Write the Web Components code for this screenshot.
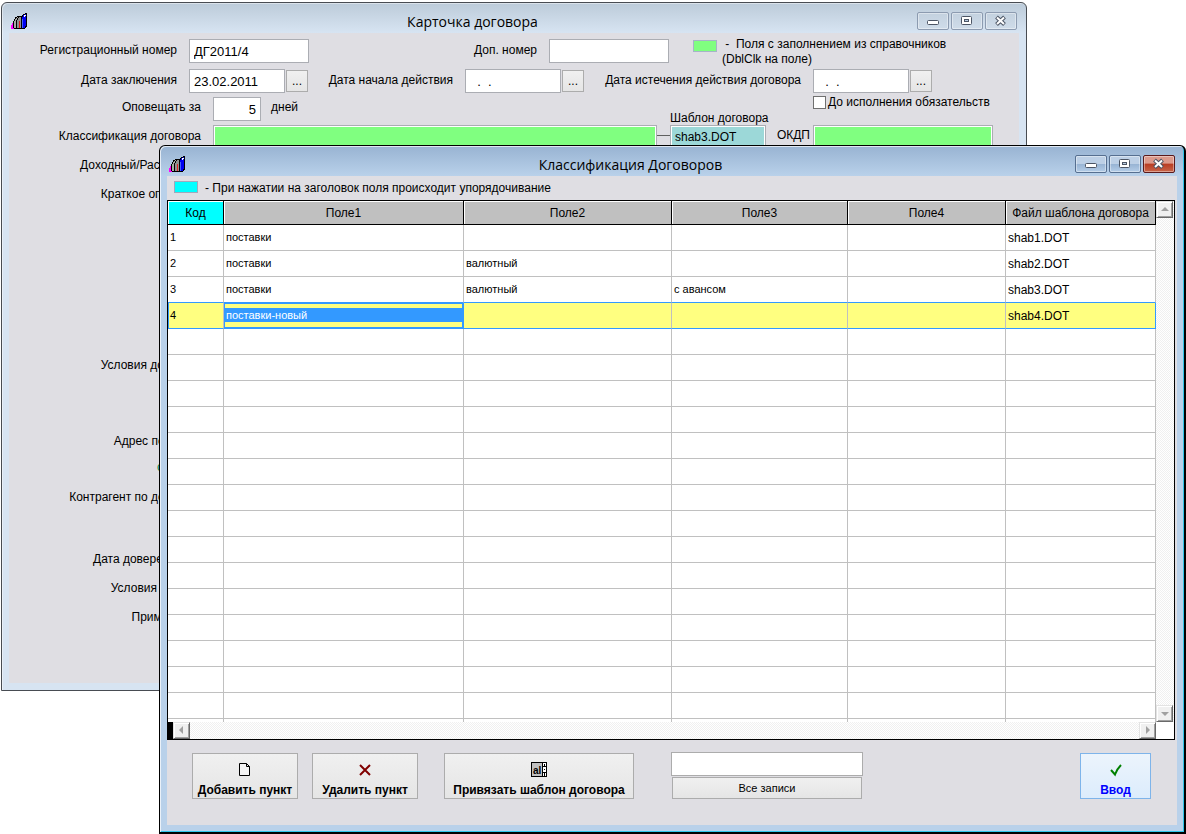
<!DOCTYPE html>
<html lang="ru">
<head>
<meta charset="utf-8">
<title>Карточка договора</title>
<style>
    html, body{
        margin: 0;
        height: 100%;
        background-color: white;
    }

    body{
        position: relative;
        min-height: 700px;
        overflow: hidden;
        font-family: "Liberation Sans", Arial, sans-serif;
        font-size: 12px;
        color: black;
    }

    /* two overlapping windows on the desktop */
    .card{
        position: absolute;
        inset: 2px 159px 143px 1px;
    }

    .classifier{
        position: absolute;
        inset: 145px 0 0 159px;
    }
</style>
</head>
<body>
    <app-window class="card" caption="Карточка договора">
        <contract-form></contract-form>
    </app-window>

    <app-window class="classifier" caption="Классификация Договоров" active>
        <classifier-view></classifier-view>
    </app-window>

<script>
class AppWindow extends HTMLElement{
    constructor(){
        super();
        this.attachShadow({mode: 'open'});
        this.shadowRoot.innerHTML=`
            <style>
                :host{
                    --top: #bccbd9;
                    --frame: #d7e4f2;
                    --edge: #484c52;
                    display: flex;
                    flex-direction: column;
                    box-sizing: border-box;
                    border: 1px solid var(--edge);
                    border-radius: 6px 6px 0 0;
                    padding: 0 7px 7px;
                    background: linear-gradient(var(--top), var(--frame) 30px);
                    box-shadow: inset 1px 1px 0 rgba(255, 255, 255, 0.45);
                }

                :host([active]){
                    --top: #98b3d2;
                    --frame: #b9d1ea;
                    --edge: #000000;
                    border-width: 1px 2px 2px 1px;
                    box-shadow: inset 1px 1px 0 rgba(255, 255, 255, 0.7), inset -1px -1px 0 #2fc4e8;
                }

                header{
                    display: grid;
                    grid-template-columns: auto 1fr auto;
                    height: 30px;
                    flex: none;
                }

                .books{
                    width: 18px;
                    height: 18px;
                    margin: 9px 0 0 1px;
                }

                h1{
                    margin: 0;
                    padding-top: 7px;
                    text-align: center;
                    font: 14px/24px "Open Sans", "Noto Sans", sans-serif;
                }

                nav{
                    display: flex;
                    justify-content: flex-end;
                    gap: 2px;
                    padding: 9px 2px 0 0;
                }

                nav button{
                    box-sizing: border-box;
                    width: 32px;
                    height: 18px;
                    padding: 0;
                    border: 1px solid #8c9bb0;
                    border-radius: 2px;
                    background: linear-gradient(#c3d1df, #cfdce9);
                    box-shadow: inset 0 0 0 1px rgba(255, 255, 255, 0.4);
                    line-height: 0;
                }

                :host([active]) nav button{
                    border-color: #566f90;
                    background: linear-gradient(#bdd0e6 48%, #98b4d4 52%, #b4cde8);
                }

                :host([active]) nav .close{
                    border-color: #5a1a1c;
                    background: linear-gradient(#dc9a8c 45%, #b93c22 50%, #c8654a);
                }

                main{
                    flex: 1;
                    min-height: 0;
                    overflow: hidden;
                    background-color: #dfdee3;
                }
            </style>
            <header>
                <svg class="books" viewBox="0 0 18 18" shape-rendering="crispEdges">
                    <path d="M1 17V14L4 9V17Z" fill="#ff00ff"/>
                    <path d="M3.500 15.500V10.500L5.500 5.500L8.500 4.500V6L6.500 10V16.500H4.500Z" fill="#a8a8a8" stroke="#000"/>
                    <path d="M6.500 16.500V9.500L8.500 4.500H11.500V15L10.500 16.500Z" fill="#909090" stroke="#000"/>
                    <path d="M9 9H10V16H9Z" fill="#e02020"/>
                    <path d="M11.500 16.500V6.500L13 3L16.500 1.500V14L14.500 16.500Z" fill="#0000f0" stroke="#000"/>
                    <path d="M13 4L16 2.500V4L14 5Z" fill="#fff"/>
                    <path d="M12 7H13V16H12Z" fill="#4060ff"/>
                </svg>
                <h1></h1>
                <nav>
                    <button aria-label="Свернуть"><svg width="30" height="16"><rect x="9.500" y="7.500" width="11" height="4" rx="1" fill="#fff" stroke="#4c5564"/></svg></button>
                    <button aria-label="Развернуть"><svg width="30" height="16"><rect x="9.500" y="3.500" width="10" height="8" rx="1" fill="#fff" stroke="#4c5564"/><rect x="12.500" y="6.500" width="4" height="2" fill="#b8cbe0" stroke="#4c5564"/></svg></button>
                    <button class="close" aria-label="Закрыть"><svg width="30" height="16"><path d="M10.500 4L18.500 11.500M18.500 4L10.500 11.500" stroke="#4c5564" stroke-width="4"/><path d="M11 4.500L18 11M18 4.500L11 11" stroke="#fff" stroke-width="2"/></svg></button>
                </nav>
            </header>
            <main><slot></slot></main>
            `;
    }

    connectedCallback(){
        this.shadowRoot.querySelector('h1').textContent = this.getAttribute('caption');
    }
}

customElements.define("app-window", AppWindow);

class ContractForm extends HTMLElement{
    constructor(){
        super();
        this.attachShadow({mode: 'open'});
        this.shadowRoot.innerHTML=`
            <style>
                :host{
                    display: block;
                    padding-top: 6px;
                    line-height: 16px;
                    white-space: nowrap;
                }

                .row{
                    display: flex;
                    height: 24px;
                    margin-bottom: 6px;
                }

                .row > label, .unit{
                    padding-top: 3px;
                }

                .row > label{
                    box-sizing: border-box;
                    flex: none;
                    text-align: right;
                    padding-right: 12px;
                }

                .head{ width: 180px; }
                .wide{ width: 204px; }
                .extra{ width: 240px; }
                .start{ width: 157px; }
                .end{ width: 229px; }

                input:not([type]){
                    box-sizing: border-box;
                    flex: none;
                    width: 120px;
                    height: 24px;
                    padding: 0 4px;
                    border: 1px solid #abadb3;
                    background-color: white;
                    font: 13px "Liberation Sans", Arial, sans-serif;
                    color: black;
                }

                input.date{ width: 96px; }
                input.days{ width: 48px; text-align: right; }

                input.ref{
                    background-color: #80ff80;
                    box-shadow: inset 0 0 0 1px white;
                }

                input.class-ref{ width: 444px; }
                input.okdp{ width: 180px; }

                input.template{
                    width: 96px;
                    background-color: #9cd8d8;
                    box-shadow: inset 0 0 0 1px white;
                    font-size: 12px;
                }

                .pick{
                    box-sizing: border-box;
                    width: 22px;
                    height: 22px;
                    margin: 1px 0 0 1px;
                    padding: 0;
                    border: 1px solid #acacac;
                    background: linear-gradient(#f0f0f0, #e5e5e5);
                    font: 12px "Liberation Sans", Arial, sans-serif;
                    color: black;
                }

                .legend{
                    display: flex;
                    gap: 5px;
                    margin-left: 24px;
                    line-height: 15px;
                }

                .legend i{
                    box-sizing: border-box;
                    width: 24px;
                    height: 12px;
                    margin-top: 1px;
                    border: 1px solid #a6b4c8;
                    background-color: #80ff80;
                }

                .legend p{
                    margin: -2px 0 0;
                    white-space: pre;
                }

                .notify{
                    height: 28px;
                    margin-bottom: 0;
                    margin-top: -2px;
                }

                .row.notify > label, .unit{
                    padding-top: 2px;
                }

                .unit{
                    flex: none;
                    width: 409px;
                    padding-left: 10px;
                    box-sizing: border-box;
                }

                .until{
                    display: flex;
                    flex-direction: column;
                    margin-top: -3px;
                }

                .check{
                    display: flex;
                    align-items: center;
                    gap: 2px;
                    margin-left: 143px;
                }

                .check input{
                    appearance: none;
                    box-sizing: border-box;
                    width: 13px;
                    height: 13px;
                    margin: 0;
                    border: 1px solid #707070;
                    background-color: white;
                }

                .link{
                    width: 13px;
                    height: 1px;
                    margin-top: 10px;
                    background-color: #606060;
                }

                .row > label.okdp-label{
                    width: 47px;
                    padding: 2px 3px 0 0;
                }

                /* captions of the lower fields, one grid row for each */
                .captions{
                    display: grid;
                    grid-template-rows: 29px 171px 76px 26px 30px 62px 29px 29px 29px;
                    width: 192px;
                    margin-top: 8px;
                    text-align: right;
                }

                .captions .note{
                    color: #008040;
                    justify-self: end;
                    width: 44px;
                    text-align: left;
                }
            </style>
            <div class="row">
                <label class="head" for="number">Регистрационный номер</label>
                <input id="number" value="ДГ2011/4">
                <label class="extra" for="extra">Доп. номер</label>
                <input id="extra">
                <div class="legend"><i></i><p> -  Поля с заполнением из справочников
(DblClk на поле)</p></div>
            </div>
            <div class="row">
                <label class="head" for="signed">Дата заключения</label>
                <input class="date" id="signed" value="23.02.2011">
                <button class="pick" aria-label="Выбрать дату заключения">...</button>
                <label class="start" for="start">Дата начала действия</label>
                <input class="date" id="start" value="  .  .">
                <button class="pick" aria-label="Выбрать дату начала">...</button>
                <label class="end" for="end">Дата истечения действия договора</label>
                <input class="date" id="end" value="  .  .">
                <button class="pick" aria-label="Выбрать дату истечения">...</button>
            </div>
            <div class="row notify">
                <label class="wide" for="days">Оповещать за</label>
                <input class="days" id="days" value="5">
                <span class="unit">дней</span>
                <div class="until">
                    <label class="check"><input type="checkbox">До исполнения обязательств</label>
                    <label for="template">Шаблон договора</label>
                </div>
            </div>
            <div class="row">
                <label class="wide" for="class">Классификация договора</label>
                <input class="ref class-ref" id="class">
                <span class="link"></span>
                <input class="template" id="template" value="shab3.DOT">
                <label class="okdp-label" for="okdp">ОКДП</label>
                <input class="ref okdp" id="okdp">
            </div>
            <div class="captions">
                <span>Доходный/Расходный</span>
                <span>Краткое описание</span>
                <span>Условия договора</span>
                <span>Адрес поставки</span>
                <span class="note">с</span>
                <span>Контрагент по договору</span>
                <span>Дата доверенности</span>
                <span>Условия оплаты</span>
                <span>Примечание</span>
            </div>
            `;
    }
}

customElements.define("contract-form", ContractForm);

// scroll bar with two arrow buttons, horizontal unless "vertical" is set
class ScrollStrip extends HTMLElement{
    constructor(){
        super();
        this.attachShadow({mode: 'open'});
        this.shadowRoot.innerHTML=`
            <style>
                :host{
                    display: flex;
                    justify-content: space-between;
                    background: repeating-conic-gradient(#f0f0f0 0 25%, #ffffff 0 50%) 0 0 / 2px 2px;
                }

                :host([vertical]){
                    flex-direction: column;
                }

                button{
                    box-sizing: border-box;
                    width: 17px;
                    height: 17px;
                    padding: 0;
                    border: 1px solid;
                    border-color: #e3e3e3 #696969 #696969 #e3e3e3;
                    background-color: #f0f0f0;
                    box-shadow: inset 1px 1px 0 white, inset -1px -1px 0 #a0a0a0;
                    line-height: 0;
                }

                path{
                    fill: #a0a0a0;
                }

                :host([vertical]) svg{
                    transform: rotate(90deg);
                }
            </style>
            <button aria-label="Назад"><svg width="15" height="15"><path d="M9 3V11L5 7Z"/></svg></button>
            <button aria-label="Вперёд"><svg width="15" height="15"><path d="M6 3V11L10 7Z"/></svg></button>
            `;
    }
}

customElements.define("scroll-strip", ScrollStrip);

class ToolButton extends HTMLElement{
    constructor(){
        super();
        this.attachShadow({mode: 'open'});
        this.shadowRoot.innerHTML=`
            <style>
                :host{
                    display: block;
                }

                button{
                    box-sizing: border-box;
                    display: flex;
                    flex-direction: column;
                    align-items: center;
                    justify-content: flex-end;
                    width: 100%;
                    height: 46px;
                    padding: 0;
                    border: 1px solid #acacac;
                    background: linear-gradient(#f0f0f0, #e5e5e5);
                    font: bold 12px/16px "Liberation Sans", Arial, sans-serif;
                    color: black;
                    white-space: nowrap;
                }

                :host([default]) button{
                    border-color: #7eb4ea;
                    background: linear-gradient(#ecf4fc, #dcecfc);
                    color: #0000ff;
                }

                ::slotted(svg){
                    width: 16px;
                    height: 16px;
                    margin-bottom: 5px;
                }
            </style>
            <button><slot name="icon"></slot><span><slot></slot></span></button>
            `;
    }
}

customElements.define("tool-button", ToolButton);

class ClassifierView extends HTMLElement{
    constructor(){
        super();
        this._rows = [
            ['1', 'поставки', '', '', '', 'shab1.DOT'],
            ['2', 'поставки', 'валютный', '', '', 'shab2.DOT'],
            ['3', 'поставки', 'валютный', 'с авансом', '', 'shab3.DOT'],
            ['4', 'поставки-новый', '', '', '', 'shab4.DOT']
        ];
        this._rowCount = 20;
        this._current = 3;
        this.attachShadow({mode: 'open'});
        this.shadowRoot.innerHTML=`
            <style>
                :host{
                    display: flex;
                    flex-direction: column;
                    height: 100%;
                }

                .hint{
                    display: flex;
                    gap: 7px;
                    height: 24px;
                    flex: none;
                    padding-left: 7px;
                    line-height: 24px;
                    white-space: nowrap;
                }

                .hint i{
                    box-sizing: border-box;
                    width: 24px;
                    height: 12px;
                    margin-top: 5px;
                    border: 1px solid #a0a8bc;
                    background-color: #00ffff;
                }

                .grid{
                    display: grid;
                    grid-template-columns: minmax(0, 1fr) 18px;
                    grid-template-rows: minmax(0, 1fr) 17px;
                    flex: 1;
                    min-height: 0;
                    margin-right: 2px;
                    border: 1px solid black;
                    background-color: white;
                }

                .rows{
                    overflow: hidden;
                }

                table{
                    width: 100%;
                    table-layout: fixed;
                    border-collapse: separate;
                    border-spacing: 0;
                }

                th, td{
                    box-sizing: border-box;
                    padding: 0;
                    overflow: hidden;
                    white-space: nowrap;
                }

                th{
                    height: 24px;
                    border-right: 1px solid black;
                    border-bottom: 1px solid black;
                    background-color: #c0c0c0;
                    box-shadow: inset 1px 1px 0 white;
                    font-weight: normal;
                    font-size: 12px;
                }

                th.sorted{
                    background-color: #00ffff;
                }

                td{
                    height: 26px;
                    padding: 0 0 2px 2px;
                    border-right: 1px solid #c0c0c0;
                    border-bottom: 1px solid #c0c0c0;
                    font-size: 11px;
                }

                td:last-child{
                    padding-bottom: 0;
                    font-size: 12px;
                }

                .current td{
                    background-color: #ffff80;
                }

                .current td, tr:has(+ .current) td{
                    border-bottom-color: #3399ff;
                }

                .current td:first-child{
                    box-shadow: inset 1px 0 0 #3399ff;
                }

                .current td:last-child{
                    border-right-color: #3399ff;
                }

                .current td.cell{
                    padding: 0 0 1px 1px;
                    box-shadow: inset 0 0 0 1px #3399ff;
                    border-right-color: #3399ff;
                }

                .cell span{
                    display: block;
                    padding-left: 1px;
                    line-height: 14px;
                    background-color: #3399ff;
                    color: white;
                }

                .bottom{
                    display: flex;
                    border-left: 5px solid black;
                }

                .bottom scroll-strip{
                    flex: 1;
                }

                footer{
                    display: flex;
                    flex: none;
                    align-items: flex-start;
                    box-sizing: border-box;
                    height: 85px;
                    padding: 13px 26px 0 25px;
                }

                .add, .remove{ width: 106px; }
                .remove{ margin-left: 14px; }
                .attach{ width: 190px; margin-left: 26px; }
                .enter{ width: 71px; margin-left: auto; }

                .attach text{
                    font: bold 10px "Liberation Sans", Arial, sans-serif;
                }

                .search{
                    display: flex;
                    flex-direction: column;
                    align-items: center;
                    gap: 1px;
                    width: 192px;
                    margin: -1px 0 0 37px;
                }

                .search input, .search button{
                    box-sizing: border-box;
                    border: 1px solid #acacac;
                    font: 12px "Liberation Sans", Arial, sans-serif;
                    color: black;
                }

                .search input{
                    width: 100%;
                    height: 24px;
                }

                .search button{
                    width: 190px;
                    height: 22px;
                    font-size: 11px;
                    background: linear-gradient(#f0f0f0, #e5e5e5);
                }
            </style>
            <div class="hint"><i></i><span>- При нажатии на заголовок поля происходит упорядочивание</span></div>
            <div class="grid">
                <div class="rows">
                    <table>
                        <colgroup>
                            <col style="width: 56px"><col><col style="width: 208px">
                            <col style="width: 176px"><col style="width: 158px"><col style="width: 150px">
                        </colgroup>
                        <thead>
                            <tr><th class="sorted">Код</th><th>Поле1</th><th>Поле2</th><th>Поле3</th><th>Поле4</th><th>Файл шаблона договора</th></tr>
                        </thead>
                        <tbody></tbody>
                    </table>
                </div>
                <scroll-strip vertical></scroll-strip>
                <div class="bottom"><scroll-strip></scroll-strip></div>
            </div>
            <footer>
                <tool-button class="add">
                    <svg slot="icon" viewBox="0 0 16 16"><path d="M2.500 2.500H9.500L12.500 5.500V14.500H2.500ZM9.500 2.500V5.500H12.500" fill="#f4f4f4" stroke="#000"/></svg>
                    Добавить пункт
                </tool-button>
                <tool-button class="remove">
                    <svg slot="icon" viewBox="0 0 16 16"><path d="M3 4L13 14M13 4L3 14" stroke="#800000" stroke-width="2" fill="none"/></svg>
                    Удалить пункт
                </tool-button>
                <tool-button class="attach">
                    <svg slot="icon" viewBox="0 0 16 16" shape-rendering="crispEdges">
                        <rect x=".5" y="1.500" width="15" height="14" fill="#c0c0c0" stroke="#000"/>
                        <path d="M12 2H15V15H12Z" fill="#fff"/>
                        <path d="M11.500 2V15M12 5.500H15M12 11.500H15M13.500 3V5M13.500 12V15M13 8.500H14" stroke="#000" fill="none"/>
                        <text x="2" y="13">al</text>
                    </svg>
                    Привязать шаблон договора
                </tool-button>
                <div class="search">
                    <input aria-label="Поиск">
                    <button>Все записи</button>
                </div>
                <tool-button class="enter" default>
                    <svg slot="icon" viewBox="0 0 16 16"><path d="M3 9L7 13.500Q9 8 13 4" stroke="#008000" stroke-width="2" fill="none"/></svg>
                    Ввод
                </tool-button>
            </footer>
            `;
    }

    connectedCallback(){
        const body = this.shadowRoot.querySelector('tbody');
        body.textContent = '';
        for(let i = 0; i < this._rowCount; i++){
            body.appendChild(this._createRow(this._rows[i] || Array(6).fill(''), i === this._current));
        }
    }

    _createRow(values, current){
        const row = document.createElement('tr');
        if(current) row.className = 'current';
        values.forEach((value, index) => {
            const cell = document.createElement('td');
            if(current && index === 1){
                const selection = document.createElement('span');
                selection.textContent = value;
                cell.className = 'cell';
                cell.appendChild(selection);
            } else {
                cell.textContent = value;
            }
            row.appendChild(cell);
        });
        return row;
    }
}

customElements.define("classifier-view", ClassifierView);
</script>
</body>
</html>
